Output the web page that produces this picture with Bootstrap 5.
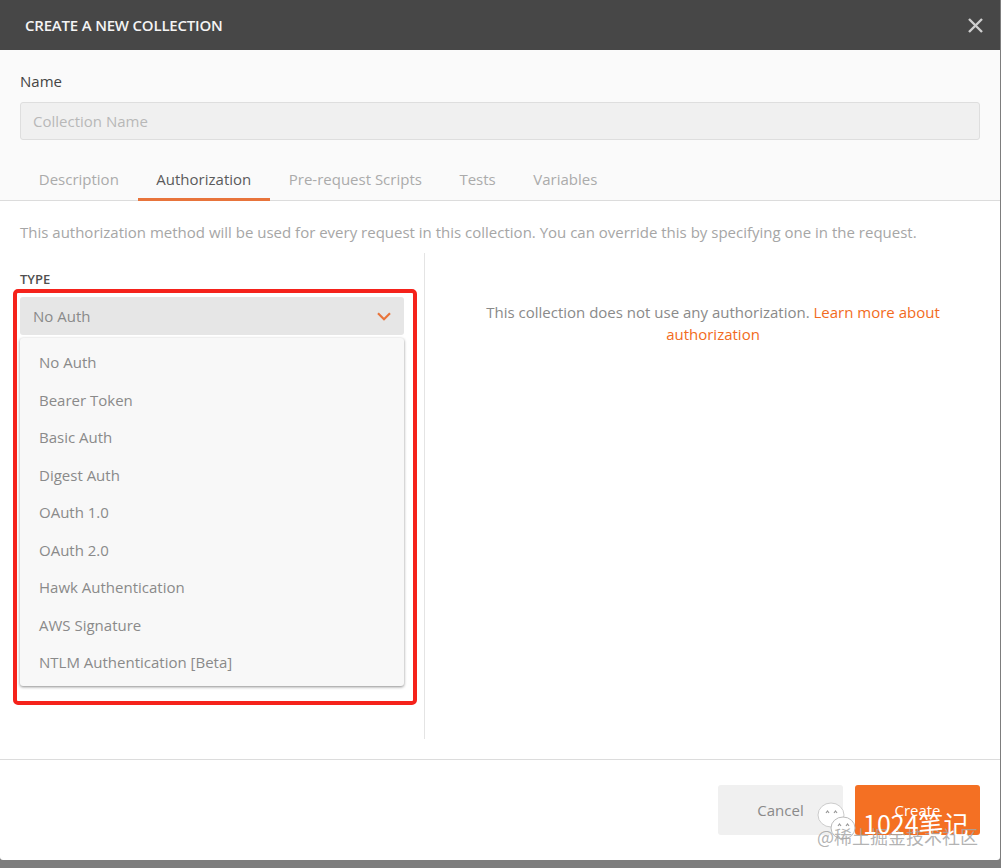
<!DOCTYPE html>
<html lang="en">
<head>
    <meta charset="UTF-8">
    <title>Create a new collection</title>
    <link href="https://cdn.jsdelivr.net/npm/bootstrap@5.3.0/dist/css/bootstrap.min.css" rel="stylesheet">
    <style>
        html, body { height: 868px; overflow: hidden; }
        body { background: #7d7d7d; font-family: "Open Sans", "Liberation Sans", sans-serif; font-size: 15px; color: #8a8a8a; }
        .dlg { width: 1000px; height: 860px; background: #fff; border-radius: 0 0 3px 3px; position: relative; }
        .dlg-head { height: 50px; background: #474747; color: #f4f4f4; padding: 0 15px 0 25px; font-size: 15px; font-weight: 600; letter-spacing: -.2px; }
        .dlg-close { width: 20px; height: 20px; background: none; border: 0; padding: 0; }
        .dlg-top { height: 151px; background: #fafafa; border-bottom: 1px solid #dcdcdc; padding: 21px 20px 0; }
        .name-label { font-size: 15px; line-height: 20px; color: #444; margin-bottom: 11px; }
        .name-input.form-control { height: 38px; background: #f0f0f0; border: 1px solid #dedede; border-radius: 3px; font-size: 15px; padding: 0 12px; }
        .name-input::placeholder { color: #b8b8b8; opacity: 1; }
        .tab-row { margin-top: 22px; gap: 0; }
        .tab-row .nav-link { height: 39px; padding: 7px 18.75px 0; color: #ababab; font-size: 15px; line-height: 20px; border-bottom: 3px solid transparent; }
        .tab-row .nav-link.active { color: #5a5a5a; border-bottom-color: #e8743b; }
        .auth-note { padding: 21px 20px 0; line-height: 20px; height: 52px; color: #a6a6a6; margin: 0; white-space: nowrap; }
        .auth-wrap { height: 486px; }
        .auth-left { width: 425px; border-right: 1px solid #e4e4e4; padding: 18px 20px 0; position: relative; }
        .type-label { font-size: 13px; font-weight: 600; line-height: 16px; color: #505050; margin-bottom: 10px; }
        .type-select { height: 38px; width: 384px; background: #e6e6e6; border-radius: 3px; padding: 0 13px; color: #8a8a8a; }
        .type-menu { width: 384px; height: 348px; margin-top: 3px; background: #f8f8f8; border-radius: 3px; box-shadow: 0 1px 3px rgba(0, 0, 0, .45); padding: 6px 0; }
        .type-menu .dropdown-item { height: 37.5px; line-height: 37.5px; padding: 0 19px; color: #8a8a8a; font-size: 15px; }
        .auth-right { padding: 48px 60px 0 61px; line-height: 22px; text-align: center; color: #8a8a8a; flex: 1; }
        .auth-right a { color: #f26b21; text-decoration: none; }
        .dlg-foot { margin-top: 20px; border-top: 1px solid #dcdcdc; padding: 25px 20px 0; gap: 12px; }
        .foot-btn { width: 125px; height: 50px; border: 0; border-radius: 3px; font-size: 15px; }
        .foot-cancel.btn { background: #f0f0f0; color: #8a8a8a; }
        .foot-create.btn { background: #f47023; color: #fff; }
        .red-box { position: absolute; left: 13px; top: 289px; width: 404px; height: 416px; border: 4px solid #f5221b; border-radius: 5px; pointer-events: none; }
        .wm-cn { position: absolute; left: 863px; top: 806px; font-family: "Noto Sans CJK SC", sans-serif; font-size: 25px; line-height: 34px; color: #fff; white-space: nowrap; }
        .wm-sub { position: absolute; left: 817px; top: 825px; font-family: "Noto Sans CJK SC", sans-serif; font-size: 18px; line-height: 22px; color: rgba(165, 165, 165, .85); white-space: nowrap; }
        .wm-icon { position: absolute; left: 816px; top: 801px; }
    </style>
</head>
<body>
    <div class="dlg">
        <div class="dlg-head d-flex align-items-center justify-content-between">
            <span>CREATE A NEW COLLECTION</span>
            <button class="dlg-close d-flex align-items-center justify-content-center" type="button" aria-label="Close">
                <svg width="15" height="15" viewBox="0 0 15 15"><path d="M1 1 14 14M14 1 1 14" stroke="#cfcfcf" stroke-width="2.4" fill="none"/></svg>
            </button>
        </div>

        <div class="dlg-top">
            <div class="name-label">Name</div>
            <input class="form-control name-input" type="text" placeholder="Collection Name">
            <ul class="nav tab-row">
                <li class="nav-item"><a class="nav-link" href="#">Description</a></li>
                <li class="nav-item"><a class="nav-link active" href="#">Authorization</a></li>
                <li class="nav-item"><a class="nav-link" href="#">Pre-request Scripts</a></li>
                <li class="nav-item"><a class="nav-link" href="#">Tests</a></li>
                <li class="nav-item"><a class="nav-link" href="#">Variables</a></li>
            </ul>
        </div>

        <p class="auth-note">This authorization method will be used for every request in this collection. You can override this by specifying one in the request.</p>

        <div class="auth-wrap d-flex">
            <div class="auth-left">
                <div class="type-label">TYPE</div>
                <div class="type-select d-flex align-items-center justify-content-between">
                    <span>No Auth</span>
                    <svg width="14" height="9" viewBox="0 0 14 9"><path d="M1 1.2 7 7.2 13 1.2" stroke="#e8743b" stroke-width="2.2" fill="none"/></svg>
                </div>
                <div class="type-menu">
                    <a class="dropdown-item" href="#">No Auth</a>
                    <a class="dropdown-item" href="#">Bearer Token</a>
                    <a class="dropdown-item" href="#">Basic Auth</a>
                    <a class="dropdown-item" href="#">Digest Auth</a>
                    <a class="dropdown-item" href="#">OAuth 1.0</a>
                    <a class="dropdown-item" href="#">OAuth 2.0</a>
                    <a class="dropdown-item" href="#">Hawk Authentication</a>
                    <a class="dropdown-item" href="#">AWS Signature</a>
                    <a class="dropdown-item" href="#">NTLM Authentication [Beta]</a>
                </div>
            </div>
            <div class="auth-right">This collection does not use any authorization. <a href="#">Learn more about authorization</a></div>
        </div>

        <div class="dlg-foot d-flex justify-content-end">
            <button class="btn foot-btn foot-cancel" type="button">Cancel</button>
            <button class="btn foot-btn foot-create" type="button">Create</button>
        </div>

        <div class="red-box"></div>
        <svg class="wm-icon" width="40" height="40" viewBox="0 0 40 40">
            <ellipse cx="15" cy="14" rx="13" ry="12" fill="#fff" stroke="#ccc"/>
            <ellipse cx="27" cy="27" rx="12" ry="11" fill="#fff" stroke="#bbb"/>
            <path d="M10 12l1.5-2 1.5 2M18 12l1.5-2 1.5 2M22 25l1.5-2 1.5 2M30 25l1.5-2 1.5 2" stroke="#999" stroke-width="1.2" fill="none"/>
        </svg>
        <div class="wm-sub">@稀土掘金技术社区</div>
        <div class="wm-cn">1024笔记</div>
    </div>
    <script src="https://cdn.jsdelivr.net/npm/bootstrap@5.3.0/dist/js/bootstrap.bundle.min.js"></script>
</body>
</html>
